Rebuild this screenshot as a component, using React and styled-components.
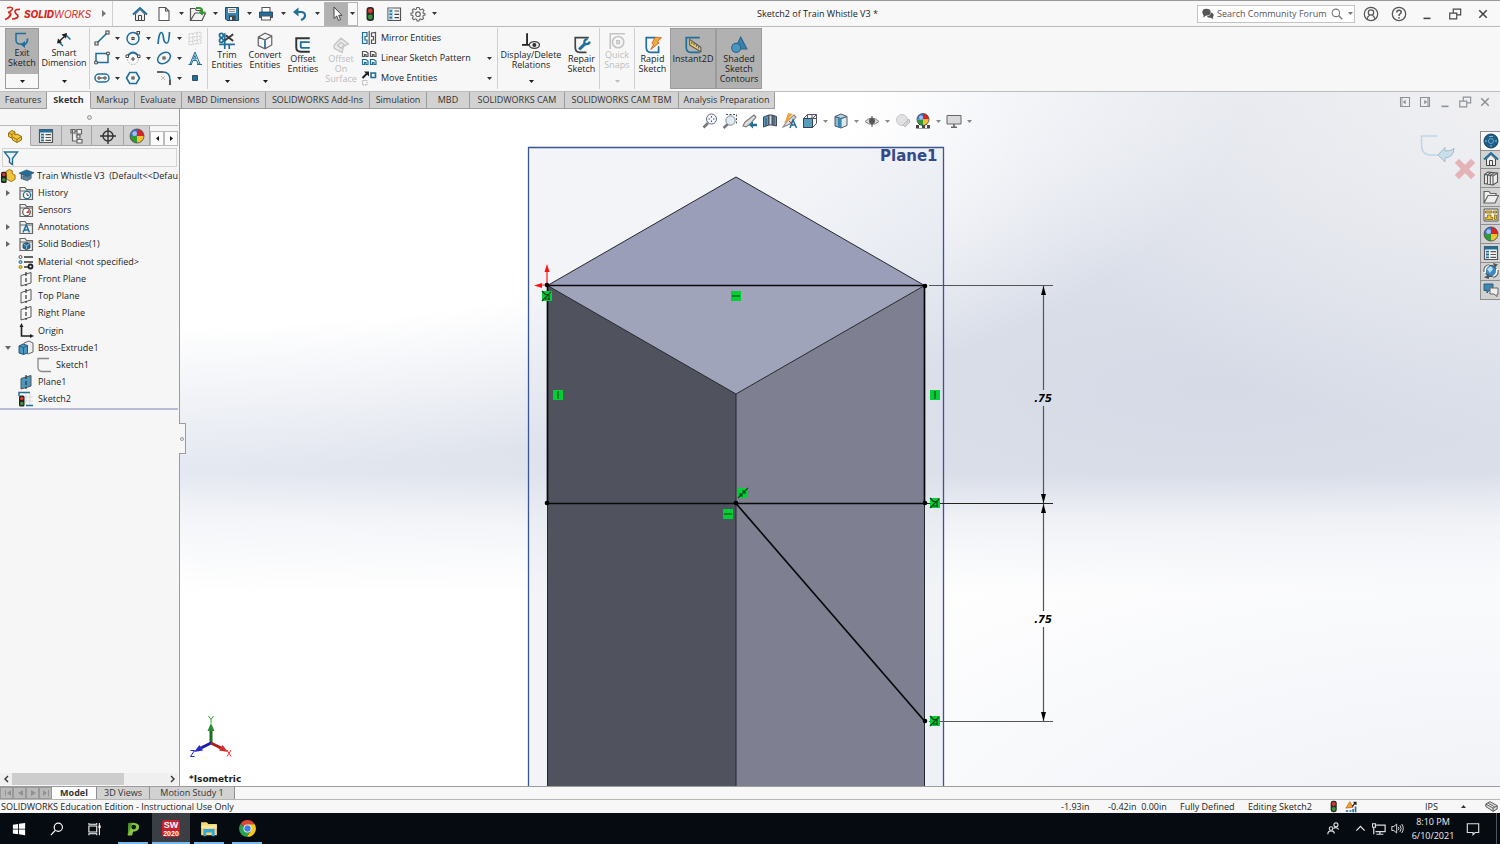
import React from "react";
import styled, { createGlobalStyle, css } from "styled-components";

const BLUE = "#206f9b";

const Global = createGlobalStyle`
  *, *::before, *::after { box-sizing: border-box; }
  body { margin: 0; font-family: "Open Sans", "Noto Sans", sans-serif; font-size: 9px; line-height: 10px; color: #1c1c1c; background: #f7f7f7; }
  button, input { font: inherit; color: inherit; margin: 0; padding: 0; border: 0; background: none; }
  svg { display: block; flex: none; }
  ul { list-style: none; margin: 0; padding: 0; }
`;

const flexCenter = css`
  display: flex;
  align-items: center;
  justify-content: center;
`;

/* ---------- icon drawings ---------- */

const Svg = ({ w = 16, h, box, children }) => (
  <svg width={w} height={h || w} viewBox={box || "0 0 16 16"} fill="none" aria-hidden="true">
    {children}
  </svg>
);

const Line = ({ c = BLUE, sw = 1.4, d, f = "none", ...rest }) => (
  <path d={d} stroke={c} strokeWidth={sw} fill={f} {...rest} />
);

const Ball = ({ cx = 8, cy = 8, r = 6 }) => (
  <g>
    <path d={`M${cx} ${cy}V${cy - r}A${r} ${r} 0 0 1 ${cx + r} ${cy}Z`} fill="#dd2222" />
    <path d={`M${cx} ${cy}H${cx + r}A${r} ${r} 0 0 1 ${cx} ${cy + r}Z`} fill="#f2c230" />
    <path d={`M${cx} ${cy}V${cy + r}A${r} ${r} 0 0 1 ${cx - r} ${cy}Z`} fill="#2f9a36" />
    <path d={`M${cx} ${cy}H${cx - r}A${r} ${r} 0 0 1 ${cx} ${cy - r}Z`} fill="#3a76d8" />
    <circle cx={cx - r / 3} cy={cy - r / 3} r={r / 3} fill="#fff" opacity=".55" />
    <circle cx={cx} cy={cy} r={r} stroke="#444" strokeWidth=".8" />
  </g>
);

const Signal = () => (
  <g>
    <rect x="4.500" y="1" width="7.500" height="14" rx="3" fill="#2b2b2b" />
    <circle cx="8.300" cy="4.800" r="2.400" fill="#d83a2c" />
    <circle cx="8.300" cy="11" r="2.400" fill="#37983a" />
  </g>
);

const Folder = () => (
  <Line c="#666" sw="1.200" f="#ededed" d="M2 14.500V2.500H7L8.500 4.500H14.500V14.500ZM2 6H14.500" />
);

const PlaneShape = ({ f = "none" }) => (
  <g>
    <Line c="#555" sw="1" f={f} d="M3 4.500L13 1.500V12L3 15Z" />
    <Line c="#333" sw="1.200" d="M8 1V15" strokeDasharray="4 2" />
  </g>
);

const icons = {
  home: (
    <Svg>
      <path d="M3.500 8V14.500H12.500V8L8 3.500Z" fill="#eee" stroke="#444" />
      <path d="M1 8.500L8 2L15 8.500" stroke={BLUE} strokeWidth="2" />
      <path d="M6.500 14V9.500H9.500V14" stroke="#444" />
    </Svg>
  ),
  page: <Svg><Line c="#555" sw="1.100" f="#fff" d="M3 1.500H9.500L13 5V14.500H3ZM9.500 1.500V5H13" /></Svg>,
  open: (
    <Svg w={18} h={16} box="0 0 18 16">
      <Line c="#555" sw="1.200" f="#f4f4f4" d="M1.500 14.500V2.500H6L7.500 4.500H12V7M1.500 14.500L6 7H16.500L13 14.500Z" />
      <Line c="#2f9a2f" sw="2.200" d="M7 2H10Q13 2 13 5V6" />
      <path d="M9.500 5.500H16.500L13 9.500Z" fill="#2f9a2f" />
    </Svg>
  ),
  save: (
    <Svg>
      <path d="M1.500 1.500H14.500V14.500H3L1.500 13Z" fill="#3a86b3" stroke="#234a60" />
      <path d="M4 2H12V7H4Z" fill="#eee" />
      <path d="M5 9.500H11.500V14H5Z" fill="#444" /><path d="M6 11H8V14H6Z" fill="#ddd" />
      <Line c="#777" sw=".800" d="M5 3.500H11M5 5.500H11" />
    </Svg>
  ),
  print: (
    <Svg>
      <Line c="#555" sw="1.100" f="#fff" d="M4 6.500V1.500H12V6.500" />
      <path d="M1.500 6H14.500V11.500H1.500Z" fill={BLUE} stroke="#235" strokeWidth=".800" />
      <Line c="#555" sw="1.100" f="#fff" d="M3.500 10H12.500V14H3.500Z" />
    </Svg>
  ),
  undo: (
    <Svg>
      <Line sw="2.200" d="M3 6H9Q13 6 13 9.500Q13 12.500 9 14" />
      <path d="M1 6L6.500 1.500V10.500Z" fill={BLUE} />
    </Svg>
  ),
  pointer: <Svg><path d="M5 1V12.500L7.700 10L9.500 14.500L11.500 13.600L9.700 9.300H13Z" fill="#fff" stroke="#444" /></Svg>,
  signal: <Svg><Signal /></Svg>,
  options: (
    <Svg>
      <path d="M2 2H14.500V14.500H2Z" fill="#f6f6f6" stroke="#555" strokeWidth="1.200" />
      <path d="M2.500 2.500H7V14H2.500Z" fill="#b9d4e2" />
      <Line sw="1.600" d="M3.500 5H6M3.500 8.300H6M3.500 11.600H6" />
      <Line c="#444" sw="1.200" d="M8.500 5H13M8.500 8.300H13M8.500 11.600H13" />
    </Svg>
  ),
  gear: (
    <Svg>
      <path d="M6.800 1.500H9.200L9.600 3.300L11 3.900L12.600 2.900L14 4.600L12.900 6.200L13.300 7.200L15 7.600V9L13.300 9.400L12.800 10.800L13.600 12.300L12 13.800L10.500 12.900L9.400 13.300L9 15H7L6.600 13.300L5.300 12.800L3.800 13.700L2.300 12.100L3.200 10.700L2.700 9.400L1 9V7.200L2.700 6.800L3.200 5.600L2.300 4.100L3.900 2.600L5.300 3.700L6.400 3.200Z" stroke="#666" strokeWidth="1.100" />
      <circle cx="8" cy="8.200" r="2.300" stroke="#666" strokeWidth="1.200" />
    </Svg>
  ),
  chat: (
    <Svg w={12} box="0 0 16 16">
      <ellipse cx="6" cy="5.500" rx="5.500" ry="4.500" fill="#555" /><path d="M2 8V13L6 9Z" fill="#555" />
      <path d="M12 6Q16 7 15.500 10L14.500 12L15 15L12 13Q8 13.500 6.500 11Q11.500 10.500 12 6Z" fill="#555" />
    </Svg>
  ),
  search: <Svg w={12}><circle cx="6.500" cy="6.500" r="5" stroke="#777" strokeWidth="1.400" /><Line c="#777" sw="1.800" d="M10 10L15 15" /></Svg>,
  user: (
    <Svg>
      <circle cx="8" cy="8" r="6.700" stroke="#555" strokeWidth="1.200" />
      <circle cx="8" cy="6.500" r="2.700" stroke="#555" strokeWidth="1.200" />
      <Line c="#555" sw="1.200" d="M4 13Q4.500 10.500 6.500 9.200M12 13Q11.500 10.500 9.500 9.200" />
    </Svg>
  ),
  help: (
    <Svg>
      <circle cx="8" cy="8" r="6.700" stroke="#555" strokeWidth="1.300" />
      <Line c="#555" sw="1.500" d="M5.800 6.500Q5.800 4.300 8 4.300T10.200 6.300Q10.200 7.300 9 7.900T8 10" />
      <circle cx="8" cy="11.800" r=".900" fill="#555" />
    </Svg>
  ),
  minimize: <Svg w={14}><Line c="currentColor" sw="1.800" d="M4 13H12" /></Svg>,
  restore: <Svg w={14}><Line c="currentColor" sw="1.300" d="M2 7H10V13.500H2ZM6 7V2.500H14.500V9H10" /></Svg>,
  close: <Svg w={12}><Line c="currentColor" sw="2" d="M3 3L13 13M13 3L3 13" /></Svg>,
  dockLeft: <Svg w={12}><Line c="currentColor" sw="1.400" d="M2 2H14V14H2Z" /><path d="M9 5V11L5 8Z" fill="currentColor" /><Line c="currentColor" sw="1" d="M4 2V14" /></Svg>,
  dockRight: <Svg w={12}><Line c="currentColor" sw="1.400" d="M2 2H14V14H2ZM12 2V14" /><path d="M7 5V11L11 8Z" fill="currentColor" /></Svg>,

  exitSketch: (
    <Svg>
      <Line sw="1.500" d="M12 1.500H2V8Q2 12 6 12H8" />
      <path d="M6.500 12.500L11 9V16Z" fill={BLUE} />
      <Line sw="1.800" d="M10 12.500Q13.500 12 13.500 6.500" />
    </Svg>
  ),
  smartDim: (
    <Svg>
      <Line sw="1.500" d="M2 9L7 14M9 2L14.500 7.500" />
      <Line c="#222" sw="1.500" d="M3 9.500L9 4" />
      <path d="M1 11.500L2 6.500L6 10.500ZM11 1L10 6.500L5.500 2.500Z" fill="#222" />
    </Svg>
  ),
  line: <Svg><Line sw="1.600" d="M3 13L13 3" /><Line c="#444" sw="1.100" f="#fff" d="M1 12H4V15H1ZM12 1H15V4H12Z" /></Svg>,
  circle: <Svg><circle cx="8" cy="8.500" r="6" stroke={BLUE} strokeWidth="1.500" /><Line c="#444" sw="1.100" f="#fff" d="M7 7.500H9V9.500H7ZM12 1.500H14.500V4H12Z" /></Svg>,
  spline: <Svg><Line sw="1.700" d="M2 14Q3 2 5.500 2.500Q7 3 7.500 8T11 13Q13 13 13.500 2" /></Svg>,
  grid: <Svg><path d="M2 4L14 2V13L2 15ZM6 3.500V14.500M10 3V14M2 8L14 6M2 11.500L14 9.500" stroke="#c4c4c4" strokeDasharray="1.500 1" /></Svg>,
  rect: <Svg><Line sw="1.500" d="M2 3.500H14V12.500H2Z" /><Line c="#444" sw="1" f="#fff" d="M.700 11.200H3.300V13.800H.700ZM12.700 2.200H15.300V4.800H12.700Z" /></Svg>,
  arc: (
    <Svg>
      <circle cx="8" cy="9" r="5.500" stroke="#aaa" strokeDasharray="1.500 1.500" />
      <Line sw="1.800" d="M2.500 6Q8 -1 13.500 6" /><Line c="#444" sw="1" f="#fff" d="M1 5H3.500V7.500H1ZM12.500 5H15V7.500H12.500ZM7 8H9V10H7Z" />
    </Svg>
  ),
  ellipse: <Svg><ellipse cx="8" cy="8" rx="7" ry="5" transform="rotate(-35 8 8)" stroke={BLUE} strokeWidth="1.500" /><Line c="#444" sw="1.100" f="#fff" d="M7 7H9V9H7Z" /></Svg>,
  letter: <Svg><Line sw="1" f="#dfeef5" d="M1.500 14.500H5M10 14.500H15M3 14L8 2L13 14H11L9.700 10.500H5.800L4.500 14ZM6.500 9H9.200L7.800 5.500Z" /></Svg>,
  slot: <Svg><rect x="1" y="4" width="14" height="8" rx="4" stroke={BLUE} strokeWidth="1.500" /><Line c="#444" sw="1" f="#fff" d="M4 7H6V9H4ZM10 7H12V9H10ZM6 8H10" /></Svg>,
  polygon: <Svg><Line sw="1.600" d="M1.500 8L4.700 2.500H11.300L14.500 8L11.300 13.500H4.700Z" /><Line c="#444" sw="1.100" d="M7 7H9V9H7Z" /></Svg>,
  fillet: <Svg><Line c="#333" sw="1.600" d="M1 2H7M14 10V15" /><Line sw="1.600" d="M7 2Q14 2 14 10" /><Line c="#aaa" sw=".800" d="M5 6L9 10M9 6L5 10" /></Svg>,
  point: <Svg><path d="M5.500 5.500H10.500V10.500H5.500Z" fill={BLUE} stroke="#234" strokeWidth=".800" /></Svg>,

  trim: (
    <Svg w={18}>
      <Line sw="1.500" d="M6 1V15M1 11H15M10 11V15" />
      <Line c="#3a3a3a" sw="1.700" d="M6 7.500L13.500 2M7 3L13.500 8" />
      <circle cx="3" cy="3" r="1.700" stroke={BLUE} strokeWidth="1.500" /><circle cx="3" cy="7.500" r="1.700" stroke={BLUE} strokeWidth="1.500" />
    </Svg>
  ),
  convert: (
    <Svg w={18}>
      <Line c="#666" sw="1.100" f="#f6f6f6" d="M2 4.500L8 1L14 3.500V11.500L8 15L2 12ZM2 4.500L8 7V15M8 7L14 3.500" />
      <Line sw="1.200" d="M8 7.500V14.500" />
    </Svg>
  ),
  offset: <Svg w={18}><Line c="#333" sw="1.700" d="M14 2H2V10Q2 14 6 14H14" /><Line sw="1.600" d="M14 5.500H6V9Q6 10.500 7.500 10.500H14" /></Svg>,
  offsetSurface: <Svg w={18}><Line c="#c6c6c6" sw="1.300" f="#ececec" d="M2 8L8 2L14.500 7L10 9.500L9 14.500L2 11ZM5 8.500L8 5.500L11 8L8 11Z" /></Svg>,
  mirror: <Svg><Line sw="1.200" f="#e3eff5" d="M1.500 2.500V13.500H6V10H4V6.500H6V2.500Z" /><Line c="#555" sw="1.200" d="M8.200 1V15M14.500 2.500V13.500H10.500V10H12.500V6.500H10.500V3Z" /></Svg>,
  pattern: (
    <Svg>
      <Line c="#555" sw="1.200" d="M1.500 1.500V6.500H3.500V4.500H5V6.500H7V3L5 1.500ZM9.500 1.500V6.500H11.500V4.500H13V6.500H15V3L13 1.500Z" />
      <Line sw="1.200" d="M1.500 9.500V14.500H3.500V12.500H5V14.500H7V11L5 9.500ZM9.500 9.500V14.500H11.500V12.500H13V14.500H15V11L13 9.500Z" />
    </Svg>
  ),
  move: (
    <Svg>
      <Line sw="1.600" d="M10 3H14.500V7.500H10Z" /><Line c="#222" sw="2" d="M1.500 8L6 3.500" />
      <path d="M3 1.500H8V6.500Z" fill="#222" /><path d="M1.500 10.500H6V15H1.500Z" stroke="#999" strokeDasharray="1 1" />
    </Svg>
  ),
  relations: (
    <Svg w={18}>
      <Line c="#222" sw="1.600" d="M4.500 1V11.500M0 11.500H8" />
      <ellipse cx="11" cy="11.500" rx="4.500" ry="3" stroke="#444" strokeWidth="1.200" fill="#eee" /><circle cx="11" cy="11.500" r="1.800" fill="#333" />
    </Svg>
  ),
  repair: (
    <Svg w={18}>
      <Line c="#444" sw="1.500" d="M14 1.500H2V10Q2 14.500 6 14.500H12" />
      <Line sw="2.800" d="M5.500 12L11 6.500" />
      <Line sw="2" d="M13 2.500Q9 3.500 10.500 7Q14 8 15 5" />
    </Svg>
  ),
  snaps: <Svg w={18}><Line c="#c4c4c4" sw="1.400" d="M2 15V1.500H15" /><circle cx="9" cy="9" r="5" stroke="#c4c4c4" strokeWidth="1.400" /><Line c="#c4c4c4" sw="1.200" d="M7.800 7.800H10.200V10.200H7.800Z" /></Svg>,
  rapid: <Svg w={18}><Line sw="1.500" d="M10 1.500H2V10Q2 14.500 6 14.500H13V9" /><path d="M10 1L15.500 1.500L12 5L13.500 6L6 12L8.500 7.500L7 6.500Z" fill="#f2a83b" stroke="#c4541d" strokeWidth=".700" /></Svg>,
  instant: <Svg w={18}><Line sw="1.500" d="M14 1.500H2V10Q2 14.500 6 14.500H14" /><path d="M5 3L15 10V14L5 8Z" fill="#f0cd62" stroke="#555" strokeWidth=".900" /><Line c="#555" sw=".900" d="M7 5V7M9 6.200V8.200M11 7.600V9.600M13 9V11" /></Svg>,
  shaded: <Svg w={18}><path d="M9.500 1L15 11.500H4.500Z" fill="#3982ad" stroke="#2a6688" /><circle cx="5.500" cy="10.500" r="4" fill="#4a97c2" stroke="#2a6688" /></Svg>,

  zoomFit: <Svg><Line c="#777" sw="2.600" d="M1.500 14.500L6 10" /><circle cx="9.500" cy="6" r="5" fill="#f4f8fa" stroke="#668" /><Line c="#456" sw="1.100" d="M6.500 6H8M11 6H12.500M9.500 3V4.500M9.500 7.500V9" /></Svg>,
  zoomArea: <Svg><Line c="#778" sw="2.600" d="M1.500 15L6 11" /><circle cx="8.500" cy="7.500" r="4.700" fill="#dcebf2" stroke="#889" /><path d="M4 1.500H14.500V12" stroke="#555" strokeDasharray="2 1.500" /></Svg>,
  prevView: <Svg><Line c="#777" sw="1.100" f="#ddd" d="M1 13L3 9L12 2L14 4L8 11L4 14Z" /><path d="M7 12L11 8.500V10.800H15V13.200H11V15.500Z" fill={BLUE} /></Svg>,
  section: <Svg><path d="M1.500 4L7 2V12L1.500 14ZM10 2L14.500 3.500V13L10 12Z" fill="#5a9cbd" stroke="#445" /><path d="M7 2H10V12H7ZM4 5V13M12 3V12" fill="#ddd" stroke="#445" /></Svg>,
  dynamic: <Svg><Line c="#888" sw="1.100" f="#ddd" d="M1 14L5 8L12 2L14 4L8 11Z" /><path d="M6 0L11 1L7 5L8.500 6L2 10L4 6Z" fill="#f0a53a" /><Line c="#c33" sw="1" d="M7 8L11 12" /><Line sw="1.500" d="M8 15L11 7L14.500 15M9.500 12H13" /></Svg>,
  cube: <Svg><Line c="#556" sw="1" f="#f4f4f4" d="M1.500 5.500L5.500 1.500H14.500V10.500L10.500 14.500H1.500ZM5.500 1.500V5M14.500 5.500H11M10 1.500V5M14.500 1.500L10.500 5.500" /><path d="M1.500 5.500H10.500V14.500H1.500Z" fill="#5a9cbd" stroke="#345" /></Svg>,
  display: <Svg><path d="M2 3.500L8 5.500V15L2 13Z" fill="#86bcd6" stroke="#556" /><path d="M8 5.500L14 3.500V12.500L8 15Z" fill="#dce9ef" stroke="#556" /><path d="M2 3.500L8 1L14 3.500L8 5.500Z" fill="#b4d6e5" stroke="#556" /><path d="M5 4.500V14L8 15V5.500Z" fill="#3d88ad" /></Svg>,
  eye: <Svg><path d="M1 8.500Q8 1.500 15 8.500Q8 14.500 1 8.500Z" fill="#d9d9d9" stroke="#888" /><circle cx="8" cy="8" r="3" fill="#555" /><Line c="#555" sw="1" d="M8 3V14" /></Svg>,
  appearance: <Svg><circle cx="7" cy="7" r="5.500" fill="#e1e1e4" stroke="#c9c9cc" /><path d="M8 12L14 6L15 9L10 14Z" fill="#d4d4d4" stroke="#bbb" /></Svg>,
  scene: <Svg><path d="M1 9H15V15.500H1Z" fill="#444" /><path d="M1 9H4V12H1ZM12 9H15V12H12ZM4 12H7V15H4ZM10 12H12V15H10Z" fill="#fff" /><Ball cx={8} cy={6.5} r={6} /></Svg>,
  monitor: <Svg><path d="M1 2.500H15V11H1Z" fill="#d9d9d9" stroke="#666" /><Line c="#666" sw="1.600" d="M8 11V14M5 14.300H11" /></Svg>,

  part: <Svg><path d="M1.500 5L5 2.500L8 4V7L10 6L14.500 8.500V12L10 14.500L5.500 12V10.500L1.500 8.500Z" fill="#f0c43c" stroke="#946c0c" /><Line c="#946c0c" sw=".900" d="M1.500 5L5 6.500V10M5 6.500L8 4M5.500 9L10 11.500L14.500 8.500M10 11.500V14.500" /></Svg>,
  property: (
    <Svg>
      <path d="M1.500 1.500H14.500V14.500H1.500Z" fill="#f4f4f4" stroke="#555" strokeWidth="1.200" /><path d="M1.500 1.500H14.500V4.500H1.500Z" fill={BLUE} />
      <Line sw="1.800" d="M3 6.700H6M3 9.500H6M3 12.300H6" /><Line c="#555" sw="1.200" d="M7.500 6.700H13M7.500 9.500H13M7.500 12.300H13" />
    </Svg>
  ),
  config: <Svg><Line c="#666" sw="1.200" f="#f2f2f2" d="M3.500 1V13H8M2 1.500H6V5H2ZM8 1.500H12.500V6H8ZM6 3H8M8 7H11V10H8ZM8 11.500H13V15H8Z" /></Svg>,
  target: <Svg><circle cx="8" cy="8" r="5" stroke="#333" strokeWidth="1.400" /><Line c="#333" sw="1.400" d="M8 0V16M0 8H16" /></Svg>,
  ball: <Svg><Ball r={7} /></Svg>,
  filter: <Svg><path d="M1.500 2H14.500L9.500 8.500V14.500L6.500 12.500V8.500Z" fill="#eef3f5" stroke={BLUE} strokeWidth="1.400" /><Line c="#555" sw="1" d="M6.500 8.500V12.500L9.500 14.500" /></Svg>,
  partSignal: (
    <Svg w={15}>
      <path d="M5 4L9 1.500L12 3V6L15 7.500V12L11 14.500L6 12Z" fill="#f0c43c" stroke="#946c0c" />
      <rect x="0" y="4" width="6" height="12" rx="2" fill="#222" /><circle cx="3" cy="7" r="1.900" fill="#d83a2c" /><circle cx="3" cy="12.500" r="1.900" fill="#37983a" />
    </Svg>
  ),
  cap: <Svg w={15}><path d="M0 5.500L8 2L16 5L9 9Z" fill={BLUE} stroke="#234" strokeWidth=".600" /><path d="M4 8V12L9 13.500L13 11V7.500L9 9.500Z" fill="#5a87a0" stroke="#234" strokeWidth=".600" /><Line c="#234" sw="1" d="M2.500 6.500V12" /></Svg>,
  history: <Svg><Folder /><circle cx="9" cy="10" r="3.600" stroke={BLUE} strokeWidth="1.300" fill="#fff" /><Line c="#444" sw="1" d="M9 8V10.300H11" /></Svg>,
  sensors: <Svg><Folder /><circle cx="8.500" cy="10" r="3.800" stroke="#555" strokeWidth="1.200" fill="#fff" /><path d="M8 11L11 7.500L11.500 11Z" fill="#d43a2c" /></Svg>,
  annotations: <Svg><Folder /><Line sw="1.500" d="M5 13.500L8.300 6L11.500 13.500M6.200 11H10.400" /></Svg>,
  bodies: <Svg><Folder /><path d="M5 8L8.500 6.500L12 8V12L8.500 13.800L5 12Z" fill={BLUE} stroke="#234" strokeWidth=".700" /><Line c="#9cc7dc" sw=".800" d="M5.500 8.300L8.500 9.700L11.500 8.300M8.500 9.700V13" /></Svg>,
  material: (
    <Svg>
      <Line c="#333" sw="1.500" d="M6 3H15M6 8H15M6 13H11" /><circle cx="2.500" cy="3" r="1.500" stroke="#555" /><circle cx="2.500" cy="8" r="1.500" fill="#8cc5df" stroke={BLUE} />
      <circle cx="2.500" cy="13" r="1.500" fill="#f0c43c" stroke="#a80" /><circle cx="12.500" cy="12.500" r="2" stroke="#222" strokeWidth="1.800" />
    </Svg>
  ),
  plane: <Svg><PlaneShape /></Svg>,
  planeBlue: <Svg><PlaneShape f="#4a97c0" /></Svg>,
  origin: <Svg><Line c="#222" sw="1.600" d="M3.500 3V13H13" /><path d="M1.500 4L3.500 0L5.500 4ZM12 11L16 13L12 15Z" fill="#222" /></Svg>,
  extrude: <Svg><path d="M6 3L11 1L15 3V12L10 14L6 12Z" fill="#eee" stroke="#666" /><path d="M1 6L5 4L9.500 5.500V13L5.500 14.500L1 13Z" fill="#4a97c0" stroke="#245a78" /><Line c="#245a78" sw=".900" d="M1 6L5.500 7.500L9.500 5.500M5.500 7.500V14.500" /></Svg>,
  sketch: <Svg><Line c="#888" sw="1.300" d="M13 1.500H2V10Q2 14.500 6 14.500H15" /></Svg>,
  sketchSignal: (
    <Svg>
      <Line c="#ccc" sw=".600" d="M8 2V14M12 2V14M3 6H15M3 10H15" /><Line sw="1.500" d="M1 5V1.500H12M8 14.500H15" />
      <rect x="1" y="4.500" width="5.500" height="11" rx="1.500" fill="#222" /><circle cx="3.800" cy="7.500" r="1.800" fill="#d83a2c" /><circle cx="3.800" cy="12.500" r="1.800" fill="#37983a" />
    </Svg>
  ),

  compass: <Svg><circle cx="8" cy="8" r="7" fill="#1e5f87" stroke="#163f58" /><circle cx="8" cy="8" r="2.500" stroke="#6aa9c8" /><Line c="#7cb6d2" sw="1.200" d="M6 3.500H10M7 13H9M3 7V9M13 7V9" /></Svg>,
  library: <Svg><Line c="#555" sw="1.100" f="#eee" d="M1.500 4.500L5 2L14.500 3V12L10 15L1.500 13.500ZM1.500 4.500L10 6L14.500 3M10 6V15M4.500 5V14M7.300 5.500V14.500M4.500 5L8 2.500M7.300 5.500L11 3" /></Svg>,
  folder: <Svg><Line c="#666" sw="1.200" f="#eee" d="M1 14V2.500H6L7.500 4.500H13V7M1 14L5 6.500H15.500L12 14Z" /></Svg>,
  palette: <Svg><path d="M1 2H15V14H1Z" fill="#eee" stroke="#555" /><path d="M2.500 4H9V6H2.500ZM10.500 4H13.500V6H10.500ZM4.500 8H8V10.500H10V12.500H2.500V10.500H4.500ZM11.500 8H13.500V12.500H11.500Z" fill="#f0c430" stroke="#765b08" strokeWidth=".700" /></Svg>,
  refresh: <Svg><circle cx="8" cy="8" r="5.500" fill="#3d88c0" stroke="#245" /><path d="M4 6L8 3L10 6L7 10Z" fill="#b5def0" /><Line c="#fff" sw="2.400" d="M2 10Q1 4 6 2M14 6Q15 12 10 14" /><Line c="#666" sw="1.200" d="M1 9Q0 3 6 1.500M15 7Q16 13 10 14.500" /><path d="M10 0L15 1.500L11.500 5ZM6 11L1 14.500L6 16Z" fill="#555" /></Svg>,
  forum: <Svg><path d="M1 2H10V8.500H6L4 11V8.500H1Z" fill="#3d88b0" stroke="#2a5c78" /><path d="M7 6H15V12H14V14.500L11 12H7Z" fill="#eee" stroke="#666" /></Svg>,

  windows: <Svg w={14}><path d="M1 3L7 2.200V7.600H1ZM8 2L15 1V7.600H8ZM1 8.600H7V14L1 13.200ZM8 8.600H15V15L8 14.100Z" fill="#fff" /></Svg>,
  find: <Svg w={14}><circle cx="9.500" cy="6" r="4.700" stroke="#fff" strokeWidth="1.300" /><Line c="#fff" sw="1.400" d="M6 9.500L1 15" /></Svg>,
  taskView: <Svg w={14}><Line c="#fff" sw="1.200" d="M1 4.500H10V11.500H1ZM1 1V2.500H10V1M1 15V13.500H10V15M13 1V15" /><path d="M12 4H14.500V7H12Z" fill="#fff" /></Svg>,
  pixel: <Svg w={14}><path d="M3 1Q15 0 15 5.500Q15 11 8 11L7 15.500H2Z" fill="#8bc53f" /><path d="M3 1H7L5 8L2 15Z" fill="#4e9a2f" /><circle cx="8.800" cy="5.800" r="2.700" fill="#0e1c10" /></Svg>,
  explorer: <Svg w={18}><path d="M1 2H6L7.500 3.500H15V13.500H1Z" fill="#f7d774" /><path d="M1 5H15V7H1Z" fill="#fde9a2" /><path d="M3 8H13V14.500H10.500V11H5.500V14.500H3Z" fill="#35a3dc" /></Svg>,
  chrome: (
    <Svg w={19}>
      <path d="M8 8L1.900 4.500A7 7 0 0 1 14.100 4.500H8Z" fill="#e04434" /><path d="M8 8L1.900 4.500A7 7 0 0 0 7.500 15L11 9.800Z" fill="#2ca14f" />
      <path d="M8 4.500H14.100A7 7 0 0 1 7.500 15L11 9.800Z" fill="#fbc91b" /><circle cx="8" cy="8" r="3.400" fill="#fff" /><circle cx="8" cy="8" r="2.700" fill="#3f7fe8" />
    </Svg>
  ),
  people: <Svg w={13}><g stroke="#ddd" strokeWidth="1.400"><circle cx="11" cy="3.500" r="2.500" /><circle cx="5" cy="8" r="2.200" /><path d="M1 15Q1 11 5 11T9 14M8 8Q11 5.500 14.500 9" /></g></Svg>,
  chevron: <Svg w={11}><Line c="#eee" sw="1.700" d="M2 11L8 5L14 11" /></Svg>,
  network: <Svg w={14}><Line c="#ddd" sw="1.400" d="M5 3.500H15V11H4M9 11V14M5 14H13M2 6V14M.500 2H4V6H.500Z" /></Svg>,
  volume: <Svg w={13}><Line c="#ddd" sw="1.200" d="M1 5.500H3.500L7 2.500V13.500L3.500 10.500H1ZM9 6Q10.500 8 9 10M11 4Q14 8 11 12M13.200 2.500Q17 8 13.200 13.500" /></Svg>,
  notify: <Svg w={14}><Line c="#ddd" sw="1.300" d="M1.500 2H14.500V12H10.500L8 14.500V12H1.500Z" /></Svg>,
  rebuild: <Svg w={13}><path d="M1 10L6 2L10 9Z" fill="#f0a52b" stroke="#b23a10" strokeWidth=".700" /><Line c="#222" sw="1.500" d="M9 8L13 3M10.500 3H13.500V6" /><Line sw="2" d="M1 13.500H4M5.500 13.500H8M10 15V11M13 15V8" /></Svg>,
  tag: <Svg w={13}><Line c="#555" sw="1.200" f="#ddd" d="M1 5L6 2L15 7V11L10 14L1 8ZM1 5L10 10L15 7M10 10V14M4 4L12 8.500" /></Svg>,
};

/* ---------- shared controls ---------- */

const IconButton = styled.button.attrs({ type: "button" })`
  ${flexCenter}
  flex: none;
  width: ${(p) => p.$w || 18}px;
  height: ${(p) => p.$h || 18}px;
  color: inherit;
`;

const CaretBox = styled.button.attrs({ type: "button" })`
  ${flexCenter}
  flex: none;
  width: ${(p) => p.$w || 12}px;
  height: ${(p) => p.$h || 18}px;
  color: ${(p) => p.$color || "#333"};
`;

const Caret = ({ label, up, ...rest }) => (
  <CaretBox aria-label={label} {...rest}>
    <svg width="5" height="3" viewBox="0 0 5 3" aria-hidden="true">
      <path d={up ? "M0 3H5L2.500 0Z" : "M0 0H5L2.500 3Z"} fill="currentColor" />
    </svg>
  </CaretBox>
);

const Divider = styled.div`
  flex: none;
  width: 1px;
  align-self: stretch;
  background: #cfcfcf;
`;

/* ---------- page frame ---------- */

const Page = styled.div`
  display: flex;
  flex-direction: column;
  min-width: 1200px;
  min-height: 100vh;
`;

const TitleBar = styled.header`
  display: flex;
  align-items: center;
  height: 27px;
  border-top: 1px solid #9a9a9a;
  border-bottom: 1px solid #b9b9b9;
  background: #f8f8f8;
`;

const Logo = styled.div`
  display: flex;
  align-items: center;
  gap: 2px;
  width: 96px;
  padding-left: 4px;
  font: italic 10px/12px Inter, "Open Sans", sans-serif;
  color: #d9291c;
  b { font-weight: 800; }
`;

const QuickTools = styled.div`
  display: flex;
  align-items: center;
  padding-left: 18px;
  & > ${IconButton}:first-child { margin-right: 6px; }
`;

const SelectTool = styled.div`
  display: flex;
  height: 24px;
  margin-left: -1px;
  border: 1px solid #b5b5b5;
  ${IconButton} { height: 22px; background: #b1b1b1; }
  ${CaretBox} { height: 22px; }
`;

const DocTitle = styled.h1`
  flex: 1;
  margin: 0;
  font-size: 9px;
  font-weight: 400;
  text-align: center;
`;

const SearchBox = styled.label`
  display: flex;
  align-items: center;
  gap: 3px;
  width: 158px;
  height: 18px;
  margin-right: 2px;
  padding-left: 4px;
  border: 1px solid #c3c3c3;
  background: #fff;
  input { flex: 1; min-width: 0; outline: 0; }
  input::placeholder { color: #555; opacity: 1; }
`;

const WindowTools = styled.div`
  display: flex;
  padding-right: 3px;
  color: #444;
`;

/* ---------- ribbon ---------- */

const Ribbon = styled.div`
  display: flex;
  height: 65px;
  padding: 1px 0 2px;
  border-bottom: 1px solid #bdbdbd;
  background: #f7f7f7;
`;

const Command = styled.div`
  display: flex;
  flex-direction: column;
  width: ${(p) => p.$w}px;
  height: 61px;
  margin-left: ${(p) => p.$ml || 0}px;
  color: ${(p) => (p.$off ? "#bdbdbd" : "#1c1c1c")};
  background: ${(p) => (p.$pressed ? "#b1b1b1" : "none")};
  border: 1px solid ${(p) => (p.$pressed || p.$boxed ? "#9b9b9b" : "transparent")};
`;

const CommandMain = styled.button.attrs({ type: "button" })`
  display: flex;
  flex-direction: column;
  align-items: center;
  flex: 1;
  padding-top: ${(p) => (p.$low ? 7 : 3)}px;
  text-align: center;
  white-space: pre;
  background: ${(p) => (p.$pressed ? "#b1b1b1" : "none")};
`;

const RibbonCommand = ({ icon, label, caret, low, fill, ...box }) => (
  <Command {...box}>
    <CommandMain $low={low} $pressed={fill}>
      {icons[icon]}
      {label}
    </CommandMain>
    {caret && <Caret label={label.replace("\n", " ") + " options"} $w={box.$w - 2} $h={14} $color="inherit" />}
  </Command>
);

const SketchGrid = styled.div`
  display: grid;
  grid-template-columns: 31px 31px 31px 20px;
  grid-template-rows: repeat(3, 20px);
  width: 117px;
  padding-left: 3px;
`;

const ToolCell = styled.div`
  display: flex;
  align-items: center;
`;

const StackedTools = styled.div`
  display: grid;
  grid-template-rows: repeat(3, 20px);
  width: 137px;
  padding-left: 1px;
`;

const StackedTool = styled.div`
  display: flex;
  align-items: center;
`;

const StackedLabel = styled.button.attrs({ type: "button" })`
  display: flex;
  flex: 1;
  align-items: center;
  gap: 4px;
  white-space: nowrap;
`;

/* ---------- workspace ---------- */

const Workspace = styled.main`
  display: flex;
  flex-direction: column;
  flex: 1;
  background:
    radial-gradient(ellipse 60% 60% at 100% 115%, #edeff5, rgba(243, 244, 248, 0)),
    linear-gradient(to bottom, rgba(255, 255, 255, 0) 55%, rgba(255, 255, 255, 0.6) 62%, #fff 72%),
    radial-gradient(ellipse 68% 54% at 15% 0, #fff 62%, rgba(255, 255, 255, 0)),
    radial-gradient(ellipse 32% 50% at 100% 0, #f0f0f2, rgba(238, 239, 242, 0)),
    radial-gradient(ellipse 110% 78% at 81% 43%, #d5dae6, #dde1eb 35%, #e6eaf2 70%, #f0f0f2);
`;

const CommandTabs = styled.div`
  display: flex;
  height: 17px;
`;

const CommandTab = styled.button.attrs({ type: "button", role: "tab" })`
  width: ${(p) => p.$w}px;
  border: solid #9c9c9c;
  border-width: 0 1px 1px 0;
  color: #333;
  background: #d2d2d2;
  white-space: nowrap;
  ${(p) => p.$on && css`
    border-bottom-color: #f8f8f8;
    background: #f8f8f8;
    font-weight: 700;
  `}
`;

const DocTools = styled.div`
  display: flex;
  align-items: flex-end;
  margin-left: auto;
  padding-right: 5px;
  color: #8d9096;
`;

const Body = styled.div`
  display: flex;
  flex: 1;
`;

const SidePanel = styled.aside`
  position: relative;
  display: flex;
  flex-direction: column;
  flex: none;
  width: 180px;
  padding-right: 1px;
  border-right: 1px solid #9c9c9c;
  background: #f6f6f6;
`;

const Handle = styled.div`
  ${flexCenter}
  height: 17px;
  border-bottom: 1px solid #bababa;
  &::before {
    content: "";
    width: 5px;
    height: 5px;
    border: 1px solid #999;
    border-radius: 50%;
    background: #ddd;
  }
`;

const SideGrip = styled.div`
  ${flexCenter}
  position: absolute;
  z-index: 1;
  top: 314px;
  right: -7px;
  width: 7px;
  height: 31px;
  border: 1px solid #9c9c9c;
  border-left: 0;
  background: #f6f6f6;
  &::before {
    content: "";
    width: 4px;
    height: 4px;
    border: 1px solid #999;
    border-radius: 50%;
  }
`;

const PanelTabs = styled.div`
  display: flex;
  height: 20px;
`;

const PanelTab = styled.button.attrs({ type: "button", role: "tab" })`
  ${flexCenter}
  width: ${(p) => p.$w || 31}px;
  border: solid #a5a5a5;
  border-width: 0 1px 1px 0;
  background: #d2d2d2;
  ${(p) => p.$on && "background: #f6f6f6; border-bottom-color: #f6f6f6;"}
`;

const PanelArrow = styled.button.attrs({ type: "button" })`
  ${flexCenter}
  width: 14px;
  height: 15px;
  align-self: flex-end;
  border: 1px solid #bbb;
  background: #fbfbfb;
`;

const FilterBox = styled.label`
  display: flex;
  align-items: center;
  height: 19px;
  margin: 2px 1px 0 2px;
  border: 1px solid #d2d2d2;
  input { flex: 1; min-width: 0; outline: 0; }
`;

const Tree = styled.ul`
  display: grid;
  grid-auto-rows: 1fr;
  height: 243px;
  border-bottom: 2px solid #b9bbd6;
`;

const TreeRow = styled.li`
  display: flex;
  align-items: center;
  gap: 4px;
  padding-left: ${(p) => (p.$depth === 2 ? 20 : 2)}px;
  white-space: pre;
`;

const RootRow = styled(TreeRow)`
  gap: 3px;
  padding-left: 1px;
`;

const Toggle = styled.span`
  ${flexCenter}
  flex: none;
  width: 12px;
`;

const HScroll = styled.div`
  display: flex;
  align-items: center;
  height: 12px;
  margin-top: auto;
  margin-bottom: 1px;
  background: #efefef;
`;

const ScrollTrack = styled.div`
  flex: 1;
  height: 12px;
  &::before {
    content: "";
    display: block;
    width: 73%;
    height: 12px;
    background: #cdcdcd;
  }
`;

/* ---------- viewport ---------- */

const Viewport = styled.section`
  position: relative;
  flex: 1;
  min-width: 0;
  min-height: 600px;
`;

const Scene = styled.svg`
  position: absolute;
  inset: 0;
  width: 100%;
  height: 100%;
`;

const HeadsUp = styled.div`
  position: relative;
  display: flex;
  justify-content: center;
  padding: 3px 5px 0 0;
`;

const ConfirmCorner = styled.button.attrs({ type: "button" })`
  position: absolute;
  top: 24px;
  right: 24px;
`;

const Triad = styled.div`
  position: absolute;
  left: 9px;
  bottom: 1px;
  font: bold 9px/12px "DejaVu Sans", sans-serif;
`;

const TaskPane = styled.div`
  position: absolute;
  top: 22px;
  right: 0;
  display: grid;
  grid-template-rows: repeat(9, 1fr);
  width: 20px;
  height: 169px;
  border: solid #8f8f8f;
  border-width: 1px 0 0 1px;
`;

const PaneButton = styled.button.attrs({ type: "button" })`
  ${flexCenter}
  border-bottom: 1px solid #8f8f8f;
  background: ${(p) => (p.$on ? "#fafafa" : "#d2d2d2")};
`;

/* ---------- bottom bars ---------- */

const ViewTabs = styled.div`
  display: flex;
  height: 13px;
  border-top: 1px solid #9c9c9c;
  background: #f7f7f7;
`;

const NavButton = styled.button.attrs({ type: "button" })`
  ${flexCenter}
  width: 13px;
  border: 1px solid #999;
  background: #b9b9b9;
`;

const ViewTab = styled.button.attrs({ type: "button", role: "tab" })`
  width: ${(p) => p.$w}px;
  border-right: 1px solid #8f8f8f;
  color: #333;
  background: ${(p) => (p.$on ? "#fff" : "#d2d2d2")};
  font-weight: ${(p) => (p.$on ? 700 : 400)};
`;

const StatusBar = styled.footer`
  display: flex;
  align-items: center;
  height: 14px;
  padding: 0 2px 0 1px;
  border-top: 1px solid #b5b5b5;
  background: #f7f7f7;
`;

const StatusItem = styled.span`
  width: ${(p) => p.$w}px;
  white-space: pre;
`;

const StatusFill = styled.span`
  flex: 1;
`;

const Taskbar = styled.nav`
  display: flex;
  align-items: center;
  height: 31px;
  color: #eee;
  background: #060a11;
`;

const TaskButton = styled.button.attrs({ type: "button" })`
  ${flexCenter}
  position: relative;
  width: 38px;
  height: 31px;
  background: ${(p) => (p.$active ? "#3b3e43" : "none")};
  &::after {
    content: "";
    position: absolute;
    right: ${(p) => (p.$active ? 0 : 4)}px;
    bottom: 0;
    left: ${(p) => (p.$active ? 0 : 4)}px;
    height: ${(p) => (p.$running ? 2 : 0)}px;
    background: #76b9ed;
  }
`;

const SwBadge = styled.span`
  width: 18px;
  height: 17px;
  border-radius: 3px;
  background: #c8202c;
  color: #fff;
  font: bold 9px/10px "Liberation Sans", sans-serif;
  small { display: block; font-size: 7px; line-height: 7px; }
`;

const Clock = styled.time`
  width: 54px;
  line-height: 14px;
  text-align: center;
`;

const DesktopEdge = styled.div`
  width: 4px;
  height: 31px;
  border-left: 1px solid #555;
`;

/* ---------- data ---------- */

const tabs = [
  ["Features", 47], ["Sketch", 44], ["Markup", 44], ["Evaluate", 47], ["MBD Dimensions", 84],
  ["SOLIDWORKS Add-Ins", 104], ["Simulation", 57], ["MBD", 43], ["SOLIDWORKS CAM", 95],
  ["SOLIDWORKS CAM TBM", 114], ["Analysis Preparation", 96],
];

const sketchTools = [
  ["line", 1], ["circle", 1], ["spline", 1], ["grid", 0],
  ["rect", 1], ["arc", 1], ["ellipse", 1], ["letter", 0],
  ["slot", 1], ["polygon", 0], ["fillet", 1], ["point", 0],
];

const tree = [
  ["history", "History", "closed"], ["sensors", "Sensors"], ["annotations", "Annotations", "closed"],
  ["bodies", "Solid Bodies(1)", "closed"], ["material", "Material <not specified>"], ["plane", "Front Plane"],
  ["plane", "Top Plane"], ["plane", "Right Plane"], ["origin", "Origin"], ["extrude", "Boss-Extrude1", "open"],
  ["sketch", "Sketch1", null, 2], ["planeBlue", "Plane1"], ["sketchSignal", "Sketch2"],
];

const headsUp = [
  ["zoomFit", 0], ["zoomArea", 0], ["prevView", 0], ["section", 0], ["dynamic", 0], ["cube", 1],
  ["display", 1], ["eye", 1], ["appearance", 0], ["scene", 1], ["monitor", 1],
];

const pane = ["compass", "home", "library", "folder", "palette", "ball", "property", "refresh", "forum"];

const relationMarks = [
  [547, 296, "x"], [736, 296, "h"], [558, 395, "v"], [935, 395, "v"],
  [743, 493, "d"], [728, 514, "h"], [935, 503, "x"], [935, 721, "x"],
];

const markPaths = {
  h: "M-4 0H4",
  v: "M0 -4V4",
  x: "M-5 5L4 -4M-5 -5L-1 -1M-1.500 -1.500H2V4M-2 3H3",
  d: "M-5 5L5 -5M-1 -2H2V1M-3 0V3H0",
};

/* ---------- sections ---------- */

const Model = () => (
  <Scene viewBox="180 109 1320 677" preserveAspectRatio="xMidYMin slice" role="img" aria-label="Train whistle sketch">
    <path d="M528.500 900V147.500H943.500V900" fill="#dfe3ee" fillOpacity=".4" stroke="#3b5590" strokeWidth="1.300" />
    <path d="M547.500 285.500L736 177L924.500 285.500Z" fill="#9a9eb8" />
    <path d="M547.500 285.500H924.500L736 394Z" fill="#a0a4bb" />
    <path d="M547.500 285.500L736 394V900H547.500Z" fill="#50525e" />
    <path d="M924.500 285.500L736 394V900H924.500Z" fill="#7e8092" />
    <path d="M547.500 900V285.500L736 177L924.500 285.500V900M547.500 285.500L736 394L924.500 285.500M736 394V900" fill="none" stroke="#26272c" />
    <path d="M547.500 503.500V285.500H924.500V503.500H547.500M736 503.500L924.500 721" fill="none" stroke="#08080a" strokeWidth="1.700" />
    <path d="M929 285.500H1053M929 721.500H1053M1043.500 286V390M1043.500 406V611M1043.500 627V721" stroke="#555" strokeWidth="1.200" />
    <path d="M925 503.500H1053" stroke="#222" strokeWidth="1.200" />
    <path d="M1043.500 286L1041 295H1046ZM1043.500 503L1041 494H1046ZM1043.500 504L1041 513H1046ZM1043.500 721L1041 712H1046Z" fill="#000" />
    <path d="M547 285V270M547 285H541" stroke="#f11" strokeWidth="1.200" />
    <path d="M547 264L544.500 272H549.500ZM534 285.500L542 283V288Z" fill="#f11" />
    {[[547, 285], [925, 286], [547, 503], [736, 503], [925, 503], [925, 721]].map(([x, y]) => (
      <circle key={`${x}-${y}`} cx={x} cy={y} r="2.300" fill="#000" />
    ))}
    {relationMarks.map(([x, y, kind]) => (
      <g key={`${x}/${y}`} transform={`translate(${x} ${y})`}>
        <path d="M-5 -5H5V5H-5Z" fill="#00cf35" />
        <path d={markPaths[kind]} stroke="#123b18" strokeWidth="1.100" fill="none" />
      </g>
    ))}
    <g fontFamily="'DejaVu Sans', sans-serif" fontWeight="700">
      <text x="880" y="161" fontSize="15" fill="#35498a">Plane1</text>
      <g fontSize="10" fontStyle="italic" fill="#000" textAnchor="middle">
        <text x="1043" y="402">.75</text>
        <text x="1043" y="623">.75</text>
      </g>
    </g>
  </Scene>
);

const TopBar = () => (
  <TitleBar>
    <Logo>
      <svg width="18" height="16" viewBox="0 0 18 16" fill="none" aria-hidden="true">
        <path d="M3 2Q8 .500 8.500 2.500Q8.500 4.500 4 6.500M4 6.500Q8 6.500 6.500 9.500Q5 12.500 1 13.500M6.500 8Q4 13 1 13.500" stroke="#d9291c" strokeWidth="1.500" />
        <path d="M16 3.500Q11 3 11 5.500Q11 7.500 13.500 9Q15.500 12.500 8 13" stroke="#d9291c" strokeWidth="1.700" />
      </svg>
      <span><b>SOLID</b>WORKS</span>
    </Logo>
    <IconButton $w={16} aria-label="Show menus">
      <svg width="4" height="7" viewBox="0 0 4 7" aria-hidden="true"><path d="M0 0V7L4 3.500Z" fill="#777" /></svg>
    </IconButton>
    <Divider />
    <QuickTools>
      <IconButton aria-label="Home">{icons.home}</IconButton>
      {["page", "open", "save", "print", "undo"].map((name) => (
        <React.Fragment key={name}>
          <IconButton aria-label={name}>{icons[name]}</IconButton>
          <Caret label={`${name} options`} $w={16} />
        </React.Fragment>
      ))}
      <SelectTool>
        <IconButton $w={23} aria-label="Select">{icons.pointer}</IconButton>
        <Caret label="Select options" $w={9} />
      </SelectTool>
      <IconButton $w={24} aria-label="Rebuild">{icons.signal}</IconButton>
      <IconButton $w={24} aria-label="File properties">{icons.options}</IconButton>
      <IconButton $w={24} aria-label="Options">{icons.gear}</IconButton>
      <Caret label="More options" $w={8} />
    </QuickTools>
    <DocTitle>Sketch2 of Train Whistle V3 *</DocTitle>
    <SearchBox>
      {icons.chat}
      <input type="text" placeholder="Search Community Forum" aria-label="Search Community Forum" />
      {icons.search}
      <Caret label="Search options" $w={8} $h={14} $color="#777" />
    </SearchBox>
    <WindowTools>
      {["user", "help", "minimize", "restore", "close"].map((name) => (
        <IconButton key={name} $w={28} aria-label={name}>{icons[name]}</IconButton>
      ))}
    </WindowTools>
  </TitleBar>
);

const Commands = () => (
  <Ribbon>
    <RibbonCommand icon="exitSketch" label={"Exit\nSketch"} caret fill $boxed $w={34} $ml={5} />
    <RibbonCommand icon="smartDim" label={"Smart\nDimension"} caret $w={50} />
    <Divider />
    <SketchGrid>
      {sketchTools.map(([name, hasCaret]) => (
        <ToolCell key={name}>
          <IconButton aria-label={name}>{icons[name]}</IconButton>
          {hasCaret ? <Caret label={`${name} options`} /> : null}
        </ToolCell>
      ))}
    </SketchGrid>
    <Divider />
    <RibbonCommand icon="trim" label={"Trim\nEntities"} caret $w={38} />
    <RibbonCommand icon="convert" label={"Convert\nEntities"} caret $w={38} />
    <RibbonCommand icon="offset" label={"Offset\nEntities"} low $w={38} />
    <RibbonCommand icon="offsetSurface" label={"Offset\nOn\nSurface"} low $off $w={38} />
    <StackedTools>
      {[["mirror", "Mirror Entities"], ["pattern", "Linear Sketch Pattern", 1], ["move", "Move Entities", 1]].map(
        ([name, label, hasCaret]) => (
          <StackedTool key={name}>
            <StackedLabel>{icons[name]}{label}</StackedLabel>
            {hasCaret ? <Caret label={`${label} options`} $w={15} /> : null}
          </StackedTool>
        )
      )}
    </StackedTools>
    <Divider />
    <RibbonCommand icon="relations" label={"Display/Delete\nRelations"} caret $w={66} />
    <RibbonCommand icon="repair" label={"Repair\nSketch"} low $w={35} />
    <Divider />
    <RibbonCommand icon="snaps" label={"Quick\nSnaps"} caret $off $w={34} />
    <Divider />
    <RibbonCommand icon="rapid" label={"Rapid\nSketch"} low $w={35} />
    <RibbonCommand icon="instant" label="Instant2D" low $pressed $w={46} />
    <RibbonCommand icon="shaded" label={"Shaded\nSketch\nContours"} low $pressed $w={46} />
  </Ribbon>
);

const Panel = () => (
  <SidePanel>
    <Handle />
    <PanelTabs>
      <PanelTab $on aria-label="Feature tree">{icons.part}</PanelTab>
      <PanelTab aria-label="Properties">{icons.property}</PanelTab>
      <PanelTab aria-label="Configurations">{icons.config}</PanelTab>
      <PanelTab $w={32} aria-label="Dimensions">{icons.target}</PanelTab>
      <PanelTab $w={26} aria-label="Appearances">{icons.ball}</PanelTab>
      <PanelArrow aria-label="Previous tabs">
        <svg width="3" height="5" viewBox="0 0 3 5" aria-hidden="true"><path d="M3 0V5L0 2.500Z" fill="#111" /></svg>
      </PanelArrow>
      <PanelArrow aria-label="Next tabs">
        <svg width="3" height="5" viewBox="0 0 3 5" aria-hidden="true"><path d="M0 0V5L3 2.500Z" fill="#111" /></svg>
      </PanelArrow>
    </PanelTabs>
    <FilterBox>
      {icons.filter}
      <input type="text" aria-label="Filter tree" />
    </FilterBox>
    <Tree>
      <RootRow>{icons.partSignal}{icons.cap}{"Train Whistle V3  (Default<<Defau"}</RootRow>
      {tree.map(([icon, label, state, depth]) => (
        <TreeRow key={label} $depth={depth}>
          <Toggle>
            {state && (
              <svg width="6" height="6" viewBox="0 0 6 6" aria-hidden="true">
                <path d={state === "open" ? "M0 1H6L3 5Z" : "M1 0V6L5 3Z"} fill="#666" />
              </svg>
            )}
          </Toggle>
          {icons[icon]}
          {label}
        </TreeRow>
      ))}
    </Tree>
    <HScroll>
      <IconButton $w={12} $h={12} aria-label="Scroll left">
        <svg width="5" height="8" viewBox="0 0 5 8" aria-hidden="true"><path d="M4 1L1 4L4 7" stroke="#333" strokeWidth="1.400" fill="none" /></svg>
      </IconButton>
      <ScrollTrack />
      <IconButton $w={12} $h={12} aria-label="Scroll right">
        <svg width="5" height="8" viewBox="0 0 5 8" aria-hidden="true"><path d="M1 1L4 4L1 7" stroke="#333" strokeWidth="1.400" fill="none" /></svg>
      </IconButton>
    </HScroll>
    <SideGrip />
  </SidePanel>
);

const GraphicsArea = () => (
  <Viewport>
    <Model />
    <HeadsUp>
      {headsUp.map(([name, hasCaret]) => (
        <React.Fragment key={name}>
          <IconButton $w={20} aria-label={name}>{icons[name]}</IconButton>
          {hasCaret ? <Caret label={`${name} options`} $w={11} $color="#888" /> : null}
        </React.Fragment>
      ))}
    </HeadsUp>
    <ConfirmCorner aria-label="Confirm or cancel sketch">
      <svg width="56" height="48" viewBox="0 0 56 48" fill="none" aria-hidden="true">
        <path d="M17 3H1.500V12Q1.500 22 11 22H18" stroke="#bfd6e4" strokeWidth="1.500" />
        <path d="M18 22L25 14.500V18Q32 18 34 15Q34 24 25 25V29Z" fill="#c9dfe9" stroke="#a4bcc8" />
        <path d="M39 30L51 42M51 30L39 42" stroke="#e3b3b8" strokeWidth="6" strokeLinecap="square" />
      </svg>
    </ConfirmCorner>
    <TaskPane>
      {pane.map((name, i) => (
        <PaneButton key={name} $on={i === 0} aria-label={name}>{icons[name]}</PaneButton>
      ))}
    </TaskPane>
    <Triad>
      <svg width="46" height="58" viewBox="0 0 46 58" fill="none" aria-hidden="true">
        <path d="M22 28V14" stroke="#1d6b22" strokeWidth="3" /><path d="M22 8L18.500 16H25.500Z" fill="#2b8a30" />
        <path d="M22 28L12 33" stroke="#1a1ab0" strokeWidth="3" /><path d="M5 37L10.500 30L14 35.500Z" fill="#2929c8" />
        <path d="M22 28L32 33" stroke="#b01a1a" strokeWidth="3" /><path d="M39 37L33.500 30L30 35.500Z" fill="#d62a2a" />
        <path d="M19.500 1L22 4.500L24.500 1M22 4.500V8" stroke="#2fa335" />
        <path d="M1.500 35.500H5.500L1.500 41.500H5.500" stroke="#22e" />
        <path d="M38 35L42 41.500M42 35L38 41.500" stroke="#f33" />
      </svg>
      *Isometric
    </Triad>
  </Viewport>
);

const Bottom = () => (
  <>
    <ViewTabs>
      {["M8 1V7L4 4ZM2 1H3V7H2Z", "M7 1V7L2 4Z", "M2 1V7L7 4Z", "M1 1V7L5 4ZM6 1H7V7H6Z"].map((d, i) => (
        <NavButton key={d} aria-label={`Tab scroll ${i + 1}`}>
          <svg width="8" height="8" viewBox="0 0 8 8" aria-hidden="true"><path d={d} fill="#919191" /></svg>
        </NavButton>
      ))}
      <ViewTab $on $w={45}>Model</ViewTab>
      <ViewTab $w={53}>3D Views</ViewTab>
      <ViewTab $w={85}>Motion Study 1</ViewTab>
    </ViewTabs>
    <StatusBar>
      SOLIDWORKS Education Edition - Instructional Use Only
      <StatusFill />
      <StatusItem $w={47}>-1.93in</StatusItem>
      <StatusItem $w={72}>{"-0.42in  0.00in"}</StatusItem>
      <StatusItem $w={68}>Fully Defined</StatusItem>
      <StatusItem $w={79}>Editing Sketch2</StatusItem>
      <Svg w={13}><Signal /></Svg>
      <IconButton $w={22} $h={13} aria-label="Rebuild status">{icons.rebuild}</IconButton>
      <StatusItem $w={63} />
      <StatusItem $w={32}>IPS</StatusItem>
      <Caret label="Units" up $w={12} $h={12} />
      <StatusItem $w={16} />
      {icons.tag}
    </StatusBar>
    <Taskbar>
      <TaskButton aria-label="Start">{icons.windows}</TaskButton>
      <TaskButton aria-label="Search">{icons.find}</TaskButton>
      <TaskButton aria-label="Task view">{icons.taskView}</TaskButton>
      <TaskButton $running aria-label="Pixel editor">{icons.pixel}</TaskButton>
      <TaskButton $running $active><SwBadge>SW<small>2020</small></SwBadge></TaskButton>
      <TaskButton $running aria-label="File explorer">{icons.explorer}</TaskButton>
      <TaskButton $running aria-label="Browser">{icons.chrome}</TaskButton>
      <StatusFill />
      <IconButton $w={34} aria-label="People">{icons.people}</IconButton>
      <IconButton $w={20} aria-label="Hidden icons">{icons.chevron}</IconButton>
      <IconButton aria-label="Network">{icons.network}</IconButton>
      <IconButton aria-label="Volume">{icons.volume}</IconButton>
      <Clock>8:10 PM<br />6/10/2021</Clock>
      <IconButton $w={26} aria-label="Notifications">{icons.notify}</IconButton>
      <StatusItem $w={10} />
      <DesktopEdge />
    </Taskbar>
  </>
);

export default function App() {
  return (
    <Page>
      <Global />
      <TopBar />
      <Commands />
      <Workspace>
        <CommandTabs role="tablist">
          {tabs.map(([label, w]) => (
            <CommandTab key={label} $w={w} $on={label === "Sketch"}>{label}</CommandTab>
          ))}
          <DocTools>
            {["dockLeft", "dockRight", "minimize", "restore", "close"].map((name) => (
              <IconButton key={name} $w={20} $h={14} aria-label={`Document ${name}`}>{icons[name]}</IconButton>
            ))}
          </DocTools>
        </CommandTabs>
        <Body>
          <Panel />
          <GraphicsArea />
        </Body>
      </Workspace>
      <Bottom />
    </Page>
  );
}
